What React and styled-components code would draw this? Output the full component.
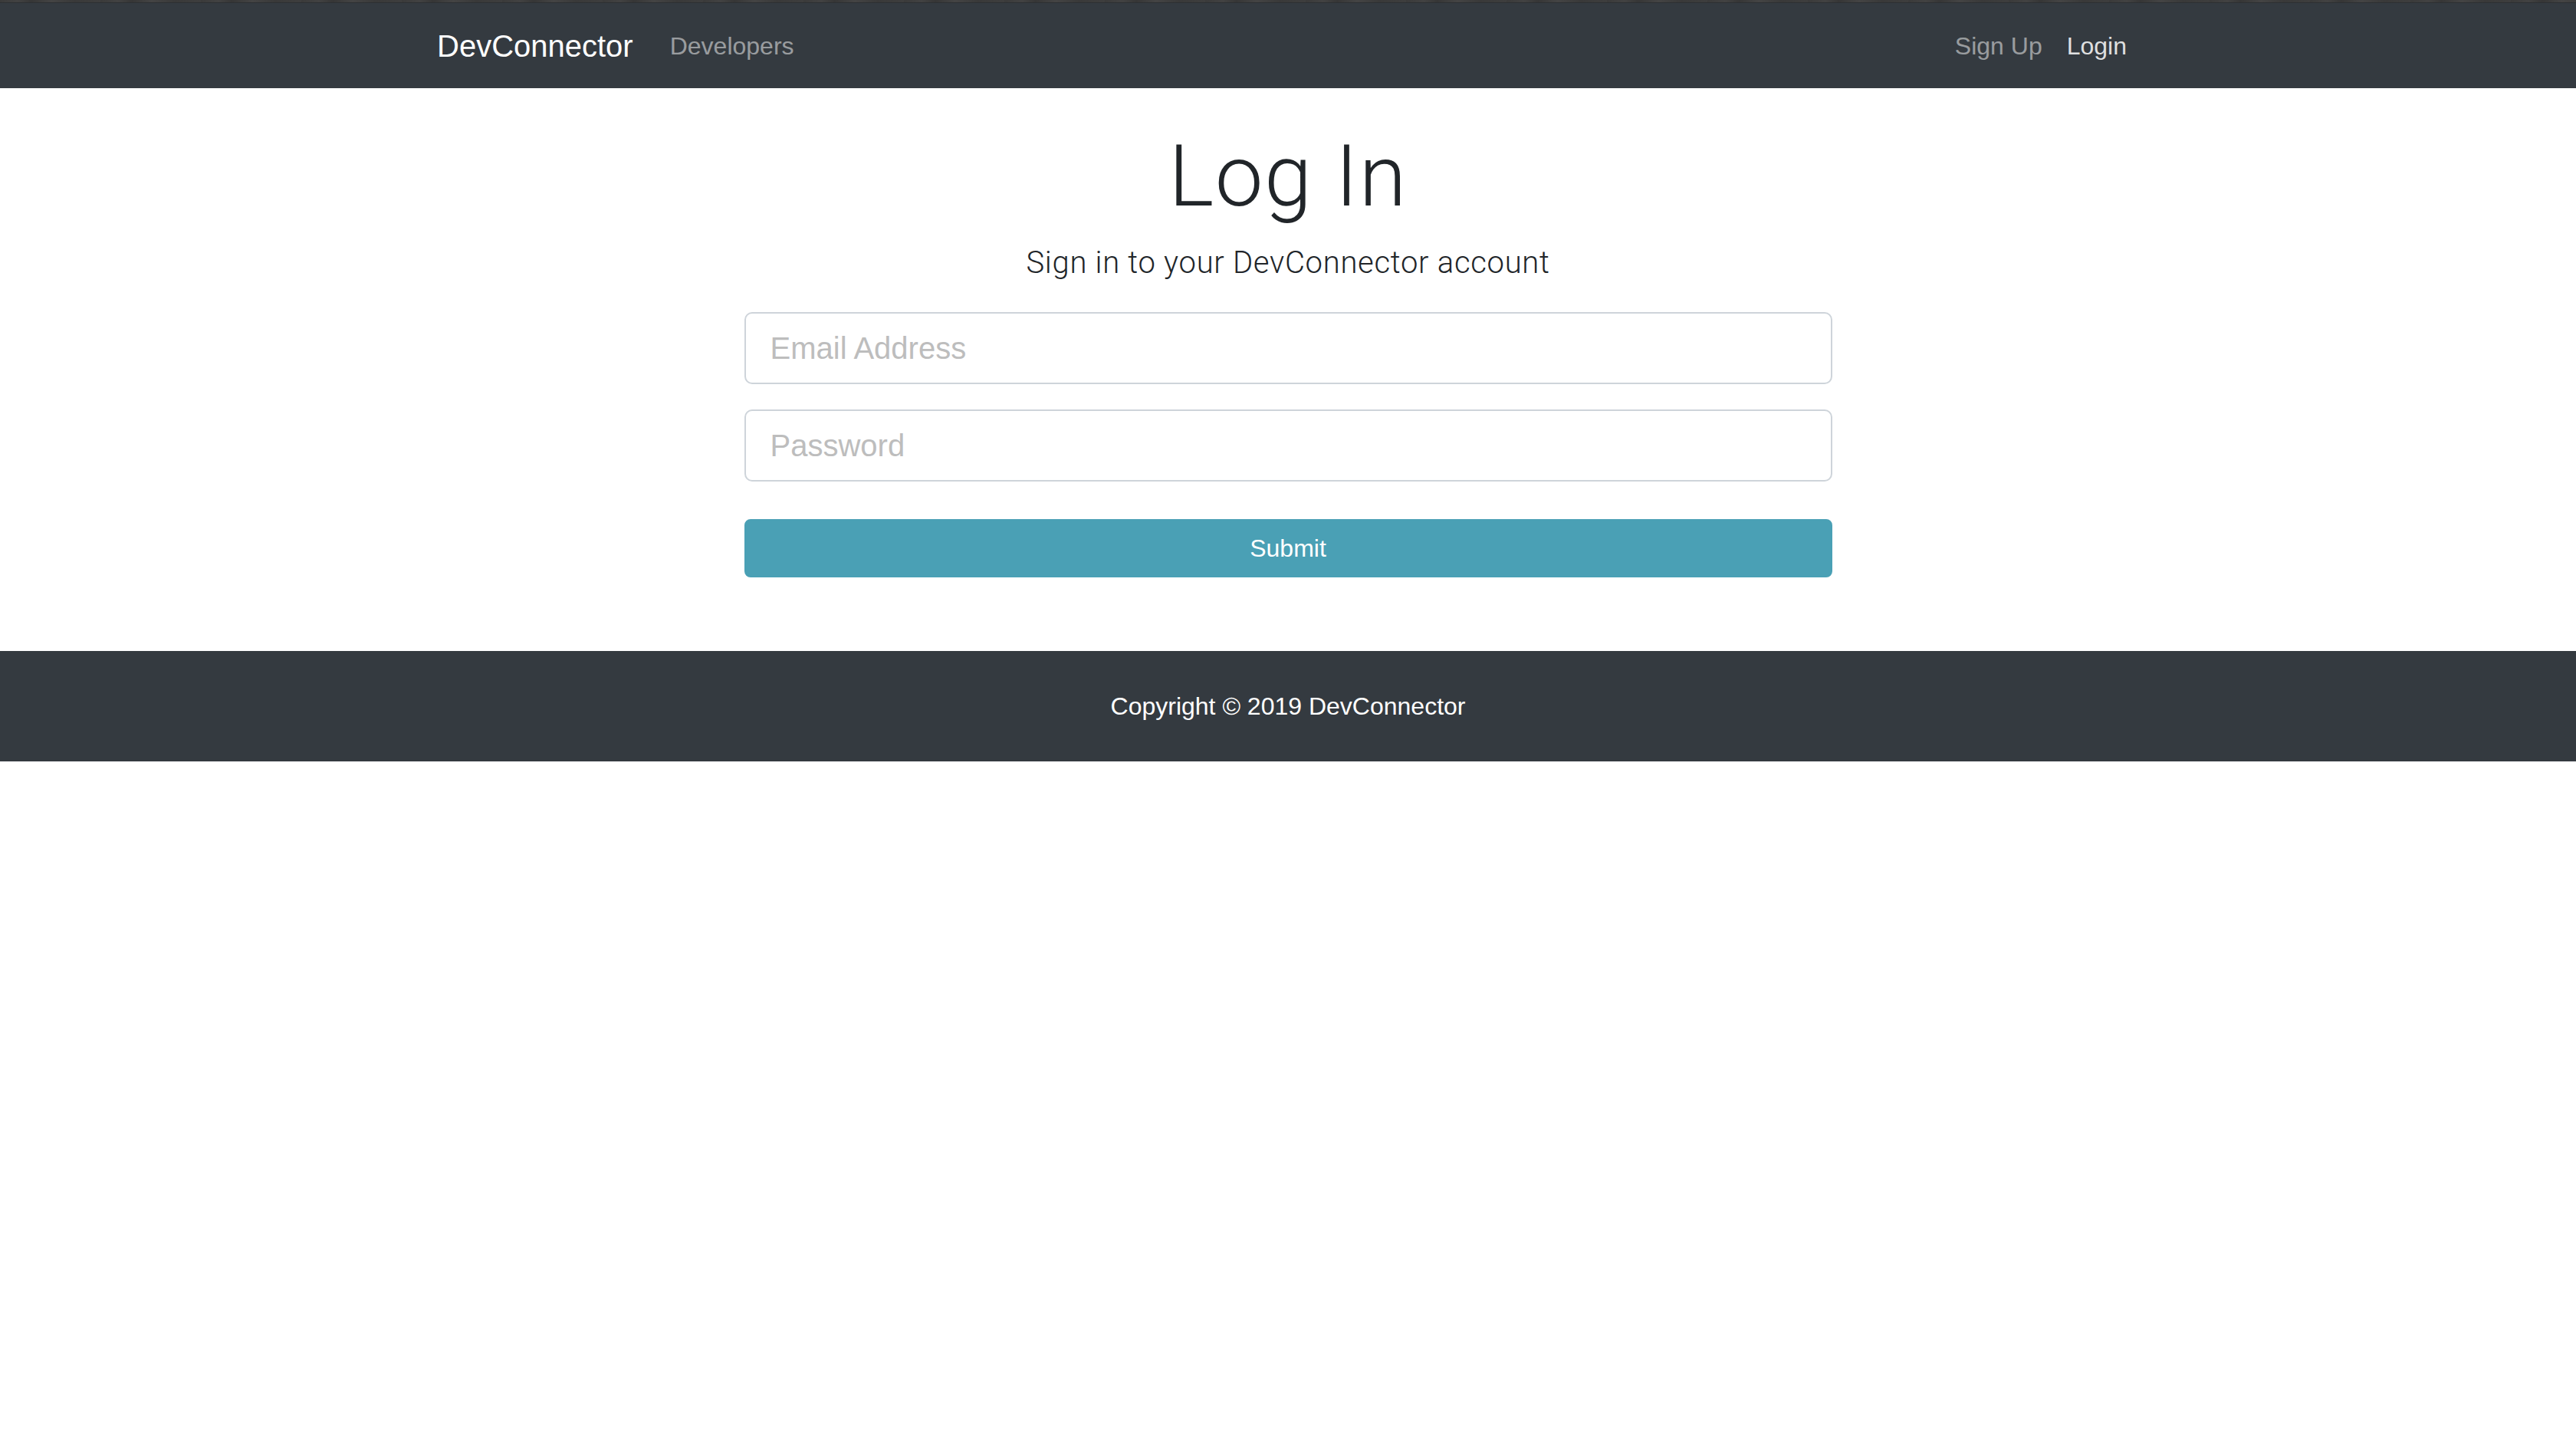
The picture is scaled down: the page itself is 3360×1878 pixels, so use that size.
import React from "react";
import styled, { createGlobalStyle } from "styled-components";

const GlobalStyle = createGlobalStyle`
  html, body { margin: 0; padding: 0; background: #fff; }
  body {
    font-family: "Liberation Sans", Arial, sans-serif;
    font-size: 32px;
    line-height: 1.5;
    color: #212529;
  }
  * { box-sizing: border-box; }
`;

const TopStrip = styled.div`
  height: 4px;
  background: repeating-linear-gradient(
    90deg,
    #3a3a3a 0px, #424242 23px, #363636 41px, #444444 67px, #393939 97px, #3e3e3e 131px
  );
  border-bottom: 1px solid #2c2f32;
`;

const Navbar = styled.nav`
  height: 111px;
  background: #343a40;
  margin-bottom: 48px;
`;

const Container = styled.div`
  max-width: 2280px;
  margin: 0 auto;
  padding: 0 30px;
  height: 100%;
`;

const NavInner = styled(Container)`
  display: flex;
  align-items: center;
  justify-content: space-between;
`;

const NavGroup = styled.div`
  display: flex;
  align-items: center;
`;

const Brand = styled.a`
  font-size: 40px;
  line-height: 60px;
  color: #fff;
  text-decoration: none;
  margin-right: 32px;
`;

const NavLink = styled.a`
  font-size: 32px;
  line-height: 48px;
  padding: 0 16px;
  text-decoration: none;
  color: ${(p) => (p.$active ? "rgba(255,255,255,0.85)" : "rgba(255,255,255,0.5)")};
`;

const Column = styled.div`
  width: 1419px;
  margin: 0 auto;
`;

const Title = styled.h1`
  margin: 0 0 16px;
  font-family: Roboto, "Liberation Sans", sans-serif;
  font-weight: 300;
  font-size: 112px;
  line-height: 1.2;
  letter-spacing: 1.5px;
  text-align: center;
  color: #212529;
`;

const Lead = styled.p`
  margin: 0 0 34px;
  font-family: Roboto, "Liberation Sans", sans-serif;
  font-weight: 300;
  font-size: 40px;
  line-height: 60px;
  letter-spacing: 0.7px;
  text-align: center;
`;

const FormGroup = styled.div`
  margin-bottom: 33px;
`;

const Input = styled.input`
  display: block;
  width: 100%;
  height: 94px;
  padding: 0 32px;
  font-family: "Liberation Sans", Arial, sans-serif;
  font-size: 40px;
  color: #495057;
  background: #fff;
  border: 2px solid #ced4da;
  border-radius: 10px;
  outline: none;
  &::placeholder { color: #bdbdbd; opacity: 1; }
`;

const SubmitButton = styled.button`
  display: block;
  width: 100%;
  height: 76px;
  margin-top: 49px;
  font-family: "Liberation Sans", Arial, sans-serif;
  font-size: 32px;
  color: #fff;
  background: #4aa0b5;
  border: 2px solid #4aa0b5;
  border-radius: 8px;
  cursor: pointer;
`;

const Footer = styled.footer`
  margin-top: 96px;
  background: #343a40;
  color: #fff;
  padding: 48px;
  font-size: 32px;
  line-height: 48px;
  text-align: center;
`;

export default function App() {
  return (
    <>
      <GlobalStyle />
      <TopStrip />
      <Navbar>
        <NavInner>
          <NavGroup>
            <Brand href="#">DevConnector</Brand>
            <NavLink href="#">Developers</NavLink>
          </NavGroup>
          <NavGroup>
            <NavLink href="#">Sign Up</NavLink>
            <NavLink href="#" $active>Login</NavLink>
          </NavGroup>
        </NavInner>
      </Navbar>
      <Column>
        <Title>Log In</Title>
        <Lead>Sign in to your DevConnector account</Lead>
        <form onSubmit={(e) => e.preventDefault()}>
          <FormGroup>
            <Input type="email" placeholder="Email Address" />
          </FormGroup>
          <FormGroup>
            <Input type="password" placeholder="Password" />
          </FormGroup>
          <SubmitButton type="submit">Submit</SubmitButton>
        </form>
      </Column>
      <Footer>Copyright © 2019 DevConnector</Footer>
    </>
  );
}
